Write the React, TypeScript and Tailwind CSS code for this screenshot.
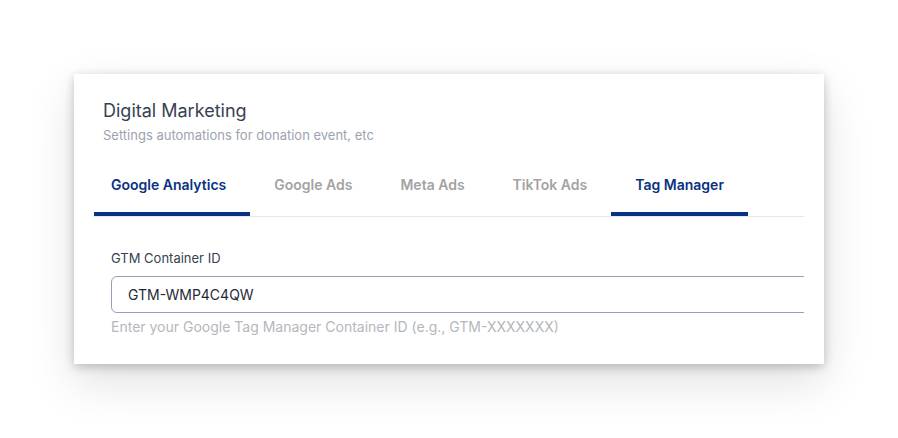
import React, { useState } from "react";

const tabs = ["Google Analytics", "Google Ads", "Meta Ads", "TikTok Ads", "Tag Manager"];

export default function App() {
  const [active] = useState("Tag Manager");
  const [gtmId, setGtmId] = useState("GTM-WMP4C4QW");

  return (
    <div className="min-h-[438px] w-[898px] bg-white p-[74px] font-['Inter',sans-serif]">
      <div className="h-[290px] w-[750px] bg-white px-5 shadow-[0_3px_10px_rgba(0,0,0,0.22),0_18px_45px_rgba(0,0,0,0.12)]">
        {/* Header */}
        <div className="pl-[9px] pt-[23px]">
          <h2 className="text-[18px] leading-[28px] text-[#374151]">Digital Marketing</h2>
          <p className="text-[13px] leading-[20px] text-[#9ca3af]">
            Settings automations for donation event, etc
          </p>
        </div>

        {/* Tabs */}
        <div className="mt-[9px] flex border-b border-[#e5e7eb]">
          {tabs.map((tab, i) => {
            const isActive = tab === active || i === 0;
            return (
              <button
                key={tab}
                className={`flex h-[62px] items-center border-b-4 pt-[2px] text-[14px] font-semibold ${
                  i === 0 ? "pl-[17px] pr-6" : "px-6"
                } ${isActive ? "border-[#0a3282] text-[#0a3282]" : "border-transparent text-[#a3a3a3]"}`}
              >
                {tab}
              </button>
            );
          })}
        </div>

        {/* Form */}
        <div className="overflow-hidden pl-[17px] pt-[31px]">
          <label className="block text-[13px] leading-[20px] text-[#374151]">GTM Container ID</label>
          <input
            value={gtmId}
            onChange={(e) => setGtmId(e.target.value)}
            className="mt-[8px] h-[37px] w-[720px] rounded-md border border-[#97a0b4] px-4 text-[14px] text-[#1f2937] outline-none"
          />
          <p className="mt-[4px] text-[14px] leading-[20px] text-[#b4b7bd]">
            Enter your Google Tag Manager Container ID (e.g., GTM-XXXXXXX)
          </p>
        </div>
      </div>
    </div>
  );
}
